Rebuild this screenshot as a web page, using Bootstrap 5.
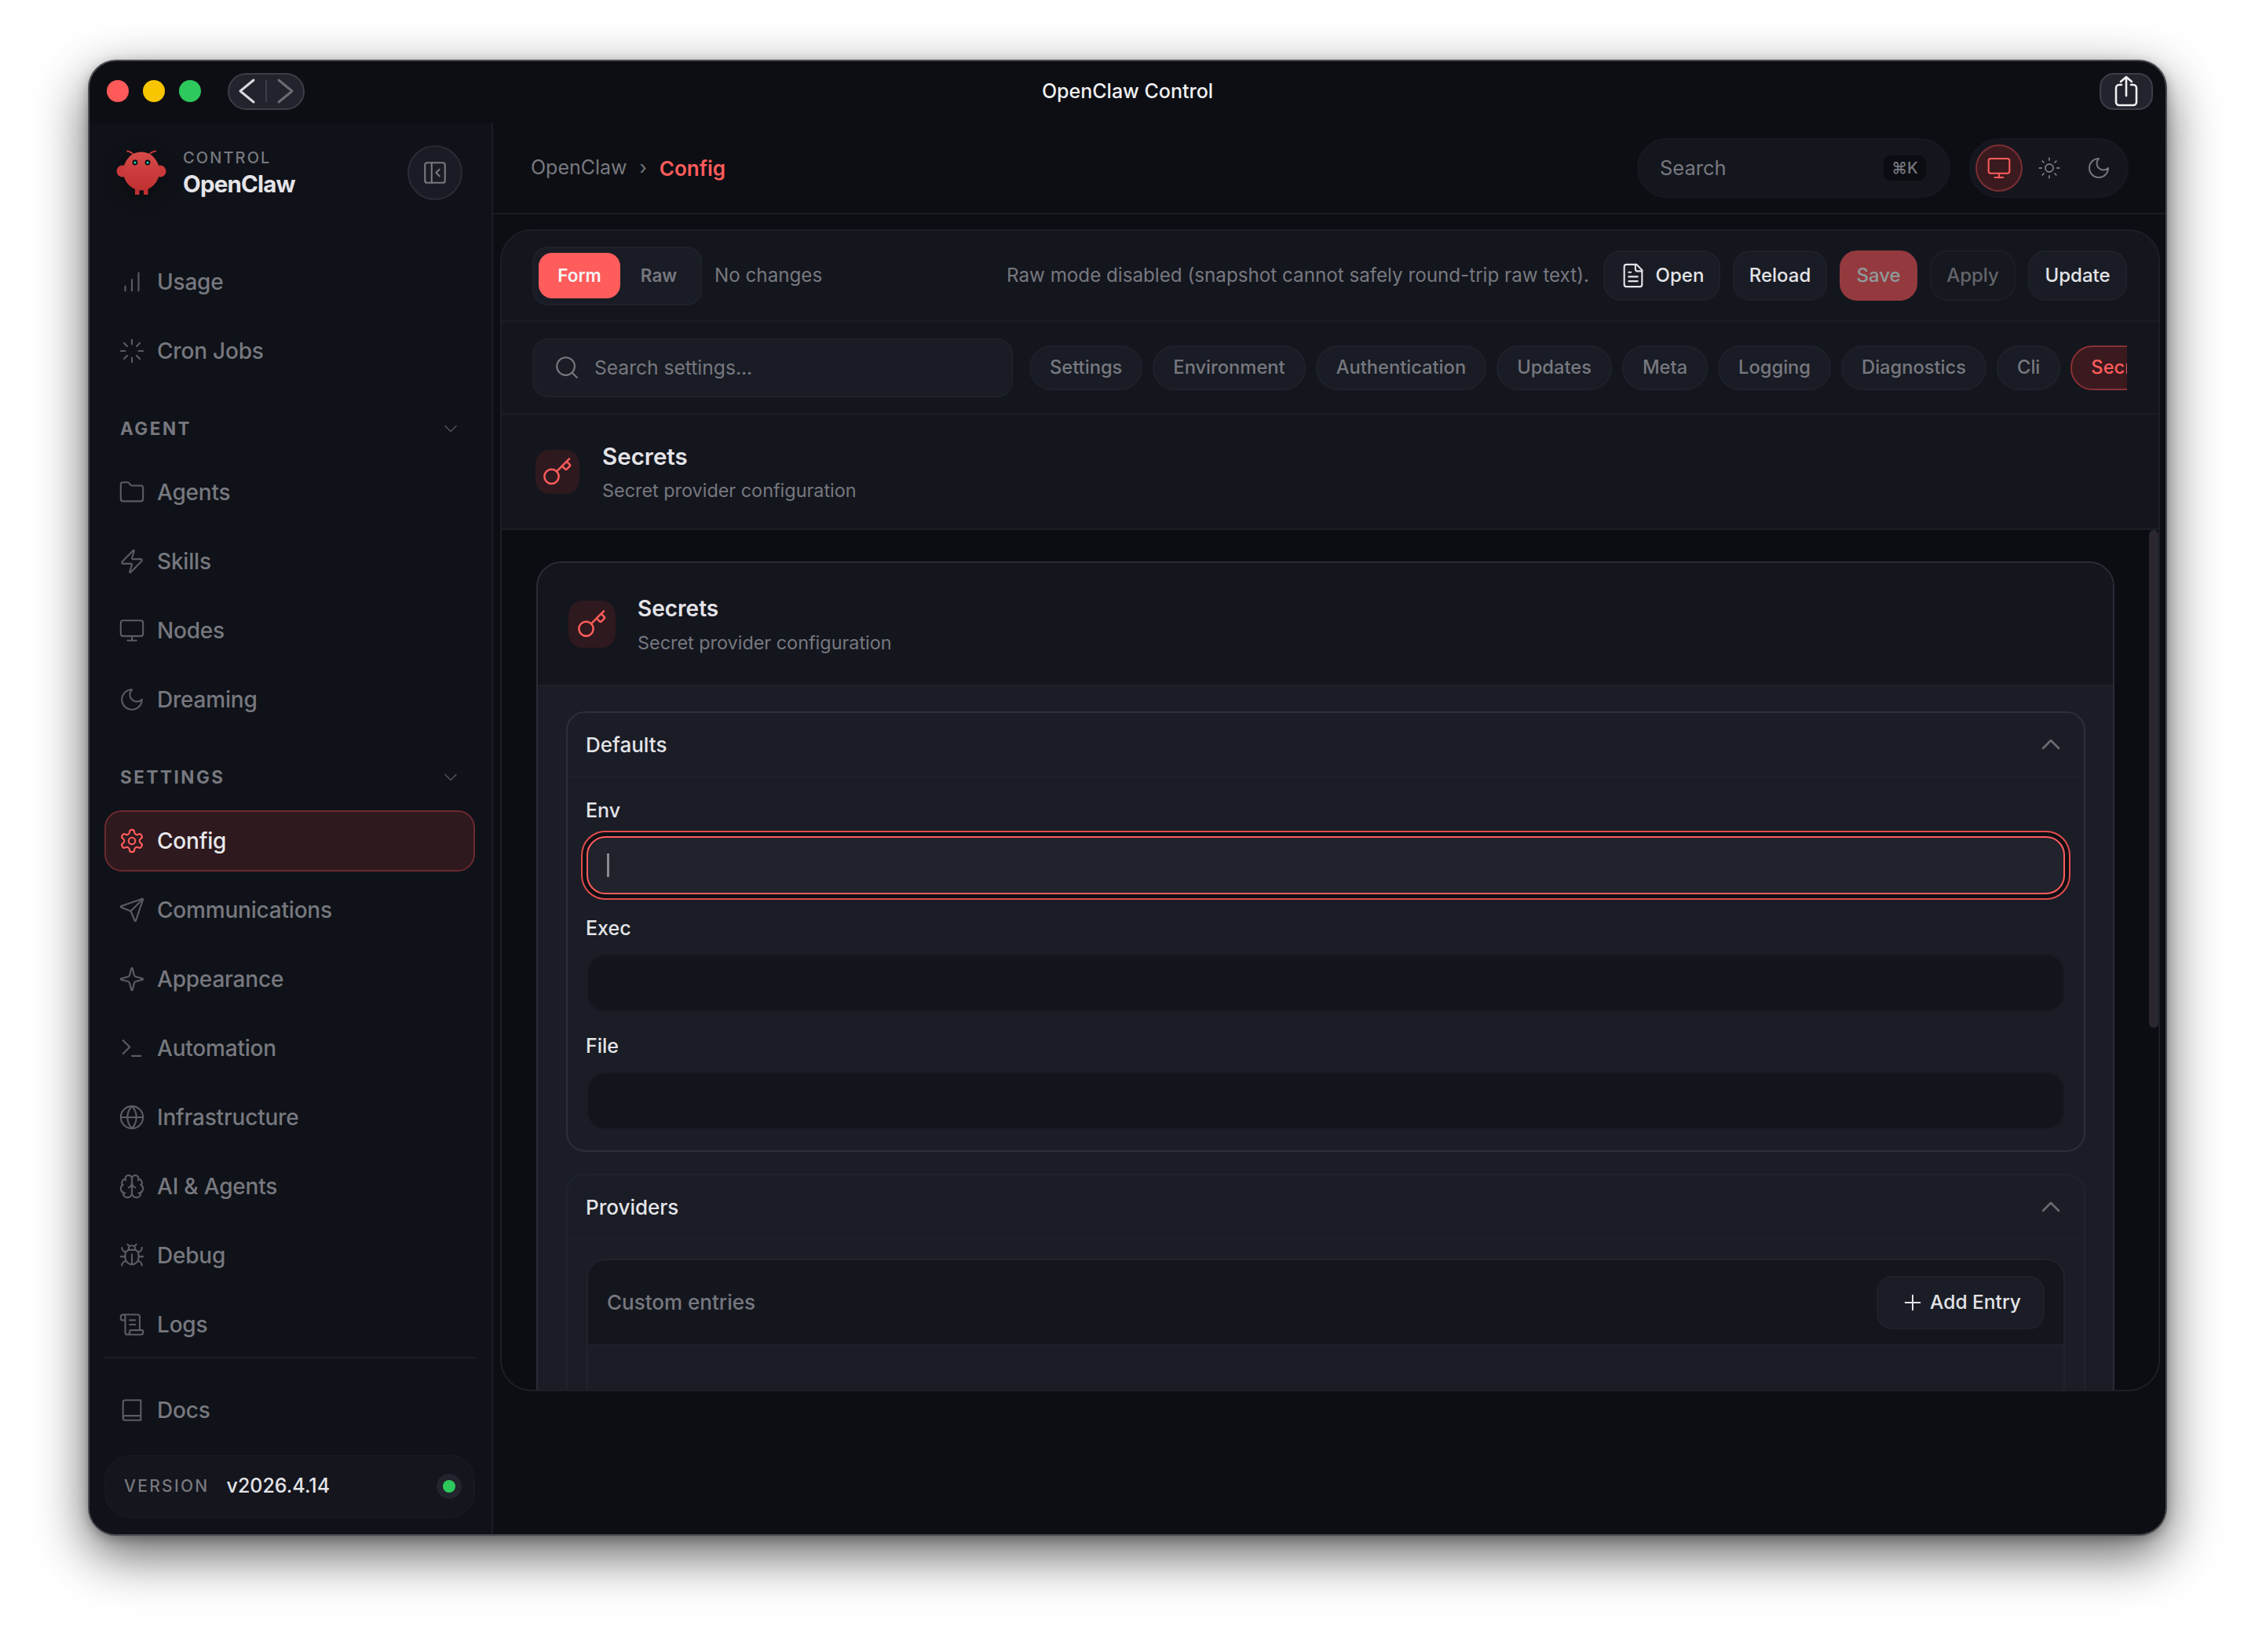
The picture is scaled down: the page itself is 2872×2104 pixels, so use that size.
<!DOCTYPE html>
<html lang="en">
<head>
    <meta charset="UTF-8">
    <title>OpenClaw Control</title>
    <link href="https://cdn.jsdelivr.net/npm/bootstrap@5.3.0/dist/css/bootstrap.min.css" rel="stylesheet">
    <script src="https://cdn.jsdelivr.net/npm/bootstrap@5.3.0/dist/js/bootstrap.bundle.min.js"></script>
    <style>
        html, body { height: 100%; }
        body {
            background: #fff;
            font-family: Inter, "Liberation Sans", sans-serif;
            font-size: 26px;
            color: #e4e4e8;
            padding: 76px 112px 149px;
            overflow: hidden;
        }
        svg.ico { fill: none; stroke: currentColor; stroke-linecap: round; stroke-linejoin: round; stroke-width: 1.5; flex-shrink: 0; }

        /* window */
        .app-window {
            height: 1880px;
            background: #0d0e13;
            border: 2px solid #4a4b50;
            border-radius: 36px;
            box-shadow: 0 24px 66px rgba(0, 0, 0, .62), 0 4px 14px rgba(0, 0, 0, .25);
            overflow: hidden;
        }
        .title-bar { height: 79px; flex-shrink: 0; padding: 0 16px 3px 16px; }
        .title-side { flex: 1 1 0; }
        .title-text { font-size: 25px; font-weight: 500; color: #f0f0f2; padding-top: 2px; }
        .light { width: 28px; height: 28px; border-radius: 50%; margin-right: 18px; }
        .light:first-child { margin-left: 6px; }
        .nav-pill-box {
            width: 98px; height: 47px; margin-left: 16px;
            background: #22232c; border: 2px solid #3c3d46; border-radius: 24px;
        }
        .nav-pill-box span { width: 2px; height: 28px; margin: 0 8px; background: #3c3d46; }
        .nav-pill-box svg { flex-shrink: 0; }
        .share-btn {
            width: 68px; height: 47px;
            background: #22232c; border: 2px solid #3c3d46; border-radius: 18px; color: #f0f0f2;
        }

        /* sidebar */
        .side-bar {
            width: 514px; flex-shrink: 0;
            background: #0f1218;
            border-right: 2px solid #1b1e26;
            padding: 28px 21px 21px 19px;
        }
        .brand-row { height: 70px; margin-bottom: 65px; padding-left: 15px; padding-right: 16px; }
        .brand-logo { filter: drop-shadow(0 6px 12px rgba(0, 0, 0, .4)); margin-right: 21px; }
        .brand-small { font-size: 20px; font-weight: 500; letter-spacing: 2.1px; color: #77787f; line-height: 26px; padding-top: 2px; }
        .brand-big { font-size: 29.5px; font-weight: 700; letter-spacing: -.8px; color: #e4e4e8; line-height: 40px; }
        .collapse-btn {
            width: 70px; height: 70px; color: #77787f;
            background: #1a1c25; border: 2px solid #2a2c35; border-radius: 50%;
        }
        .side-link {
            height: 78px; margin-bottom: 10px; padding-left: 16px;
            border: 2px solid transparent; border-radius: 22px;
            font-size: 28px; font-weight: 500; letter-spacing: -.2px; color: #77787f; text-decoration: none;
        }
        .side-link svg { margin-right: 15px; color: #5b5c63; }
        .side-link.is-on { background: #2e191e; border-color: #6c2a30; color: #e8e8ec; }
        .side-link.is-on svg { color: #ff5c5c; }
        .side-head {
            height: 40px; margin: 30px 0 22px; padding: 0 17px 0 20px;
            font-size: 22.5px; font-weight: 700; letter-spacing: 2.5px; color: #77787f;
        }
        .side-head svg { color: #55565d; stroke-width: 1.2; }
        .side-rule { height: 2px; background: #1b1e26; margin: -8px 0 27px; }
        .version-box {
            height: 80px; margin-top: 8px; padding: 0 16px 0 23px;
            background: #14151d; border: 2px solid #171922; border-radius: 32px;
        }
        .version-label { font-size: 21px; font-weight: 500; letter-spacing: 2.3px; color: #77787f; margin-right: 22px; }
        .version-num { font-size: 25px; font-weight: 500; color: #e4e4e8; }
        .status-dot { width: 16px; height: 16px; border-radius: 50%; background: #2ec95c; box-shadow: 0 0 0 8px #22242e; margin-right: 7px; }

        /* top bar */
        .top-bar { height: 116px; flex-shrink: 0; padding: 0 47px 0 48px; border-bottom: 2px solid #1a1c24; }
        .crumb { font-size: 25px; color: #77787f; }
        .crumb-sep { font-size: 24px; margin: 0 16px; }
        .crumb-now { font-size: 26px; font-weight: 600; color: #ff5c5c; }
        .top-search {
            width: 399px; height: 76px; padding: 0 29px 0 27px;
            background: #14161e; border: 2px solid #171922; border-radius: 38px;
            font-size: 25.5px; color: #77787f;
        }
        .key-hint {
            width: 54px; height: 32px; background: #0c0d12; border-radius: 9px;
            font-size: 20px; font-weight: 500; color: #77787f;
        }
        .theme-box {
            width: 203px; height: 76px; margin-left: 24px; padding: 0 6px;
            background: #14161e; border: 2px solid #171922; border-radius: 38px; color: #77787f;
        }
        .theme-on { width: 60px; height: 60px; border-radius: 50%; background: #3a1a1e; border: 2px solid #7a2e32; color: #ff5c5c; }
        .theme-off { width: 68px; height: 60px; }
        .theme-off.is-narrow { width: 60px; }

        /* config panel */
        .config-panel {
            height: 1480px; margin: 19px 7px 0 9px;
            background: #14161e; border: 2px solid #1d1f28; border-radius: 40px; overflow: hidden;
        }
        .tool-row { height: 116px; flex-shrink: 0; padding: 0 40px 0 39px; border-bottom: 2px solid #1c1e27; }
        .seg-box { width: 216px; height: 75px; padding: 0 6px; background: #191c25; border: 2px solid #1e212a; border-radius: 20px; }
        .seg-btn { height: 58px; font-size: 22.5px; font-weight: 600; border-radius: 17px; padding: 0; color: #77787f; border: 0; }
        .seg-btn.is-on { width: 104px; flex-shrink: 0; background: #ff5c5c; color: #f5f5f6; }
        .seg-btn.is-off { flex: 1 1 0; padding-left: 2px; background: transparent; }
        .soft-text { font-size: 24.2px; color: #77787f; }
        .act-btn {
            height: 64px; padding: 0; font-size: 24px; font-weight: 500;
            color: #e4e4e8; background: #191c25; border: 2px solid #1e212a; border-radius: 22px;
        }
        .act-btn:disabled { opacity: 1; }
        .act-btn svg { margin-right: 12px; }
        .act-open { width: 149px; }
        .act-reload { width: 120px; }
        .act-save { width: 99px; background: #943a3f; border-color: #943a3f; color: #8f9a9a; }
        .act-apply { width: 109px; background: #16181f; border-color: #1c1e26; color: #63646b; }
        .act-update { width: 126px; }
        .chip-row { height: 118px; flex-shrink: 0; padding: 0 40px 0 39px; border-bottom: 2px solid #1c1e27; }
        .setting-search {
            width: 612px; height: 75px; padding: 0 25px; margin-right: 21px; flex-shrink: 0;
            background: #191c25; border: 2px solid #1e212a; border-radius: 20px; font-size: 24.6px; color: #77787f;
        }
        .setting-search svg { margin-right: 18px; }
        .chip-strip { overflow: hidden; gap: 13px; min-width: 0; }
        .chip-item {
            height: 57px; padding: 0 24px; flex-shrink: 0;
            font-size: 23.7px; font-weight: 500; color: #77787f;
            background: #191c25; border: 2px solid #1e212a; border-radius: 28px;
        }
        .chip-item.is-on { background: #3a1a1e; border-color: #8a3036; color: #ff5c5c; }
        .hero-row { height: 147px; flex-shrink: 0; padding-left: 43px; border-bottom: 2px solid #1c1e27; }
        .key-tile { width: 56px; height: 56px; margin-right: 29px; border-radius: 18px; background: #2e191e; color: #ff5c5c; }
        .hero-text { padding-top: 4px; }
        .hero-title { font-size: 29.5px; font-weight: 600; line-height: 38px; color: #e4e4e8; }
        .hero-sub { font-size: 23.4px; line-height: 36px; color: #77787f; margin-top: 7px; }
        .panel-body { background: #0c0d12; padding: 40px 56px 0 44px; overflow: hidden; min-height: 0; }
        .scroll-thumb { position: absolute; top: 0; right: 0; width: 12px; height: 634px; border-radius: 6px; background: #2a2730; }

        /* cards */
        .group-card { background: #1a1d26; border: 2px solid #2a2c36; border-radius: 32px 32px 0 0; overflow: hidden; }
        .group-card-head { height: 157px; padding-left: 39px; background: #14161e; border-bottom: 2px solid #1e2029; }
        .group-card-head .key-tile { width: 60px; height: 60px; margin-right: 28px; }
        .group-card-head .hero-text { padding-top: 4px; }
        .group-card-head .hero-title { font-size: 28px; }
        .group-card-head .hero-sub { margin-top: 7px; }
        .group-card-body { padding: 32px 35px 300px 36px; }
        .sub-card { border: 2px solid #2c2e39; border-radius: 24px; }
        .sub-card.is-faint { border-color: #20232c; margin-top: 28px; }
        .sub-head { height: 82px; padding: 0 30px 0 23px; border-bottom: 2px solid #1d2029; font-size: 26px; font-weight: 500; color: #e4e4e8; }
        .sub-chev { fill: none; stroke: #6b6c72; stroke-width: 2.6; stroke-linecap: round; stroke-linejoin: round; }
        .sub-body { padding: 27px 24px 26px; }
        .is-faint .sub-body { padding-top: 24px; }
        .field-label { display: block; height: 30px; line-height: 30px; margin: 0 0 18px -1px; font-size: 25px; font-weight: 500; color: #e4e4e8; }
        .field-input {
            height: 74px; padding: 0 26px; font-size: 26px; color: #e4e4e8;
            background: #13151d; border: 2px solid #191b23; border-radius: 24px; box-shadow: none;
        }
        .field-gap { margin-bottom: 28px; }
        .field-input.is-focus { background: #20222c; border-color: #ff5c5c; box-shadow: 0 0 0 5px #0e0f14, 0 0 0 7px #e04c4c; }
        .text-caret { position: absolute; left: 26px; top: 22px; width: 3px; height: 30px; background: #8a8a8f; }
        .entry-box { border: 2px solid #20232c; border-radius: 24px 24px 0 0; overflow: hidden; }
        .entry-head { height: 109px; padding: 0 24px; background: #14161e; border-bottom: 2px solid #1e2029; font-size: 26px; font-weight: 500; color: #77787f; }
        .add-btn {
            width: 214px; height: 68px; padding: 0; font-size: 24.5px; font-weight: 500; color: #e4e4e8;
            background: #1a1d26; border: 2px solid #1e212a; border-radius: 20px;
        }
        .add-btn svg { margin-right: 6px; }
        .entry-fill { height: 240px; }
    </style>
</head>
<body>
    <svg width="0" height="0" class="position-absolute">
        <defs>
            <symbol id="i-usage" viewBox="0 0 24 24"><path d="M12 20V10M18 20V4M6 20v-4"/></symbol>
            <symbol id="i-cron" viewBox="0 0 24 24"><path d="M12 2v4M12 18v4M4.93 4.93l2.83 2.83M16.24 16.24l2.83 2.83M2 12h4M18 12h4M4.93 19.07l2.83-2.83M16.24 7.76l2.83-2.83"/></symbol>
            <symbol id="i-folder" viewBox="0 0 24 24"><path d="M20 20a2 2 0 0 0 2-2V8a2 2 0 0 0-2-2h-7.9a2 2 0 0 1-1.69-.9L9.6 3.9A2 2 0 0 0 7.93 3H4a2 2 0 0 0-2 2v13a2 2 0 0 0 2 2Z"/></symbol>
            <symbol id="i-zap" viewBox="0 0 24 24"><path d="M4 14a1 1 0 0 1-.78-1.63l9.9-10.2a.5.5 0 0 1 .86.46l-1.92 6.02A1 1 0 0 0 13 10h7a1 1 0 0 1 .78 1.63l-9.9 10.2a.5.5 0 0 1-.86-.46l1.92-6.02A1 1 0 0 0 11 14z"/></symbol>
            <symbol id="i-monitor" viewBox="0 0 24 24"><rect x="2" y="3" width="20" height="14" rx="2"/><path d="M8 21h8M12 17v4"/></symbol>
            <symbol id="i-moon" viewBox="0 0 24 24"><path d="M12 3a6 6 0 0 0 9 9 9 9 0 1 1-9-9Z"/></symbol>
            <symbol id="i-gear" viewBox="0 0 24 24"><path d="M12.22 2h-.44a2 2 0 0 0-2 2v.18a2 2 0 0 1-1 1.73l-.43.25a2 2 0 0 1-2 0l-.15-.08a2 2 0 0 0-2.73.73l-.22.38a2 2 0 0 0 .73 2.73l.15.1a2 2 0 0 1 1 1.72v.51a2 2 0 0 1-1 1.74l-.15.09a2 2 0 0 0-.73 2.73l.22.38a2 2 0 0 0 2.73.73l.15-.08a2 2 0 0 1 2 0l.43.25a2 2 0 0 1 1 1.73V20a2 2 0 0 0 2 2h.44a2 2 0 0 0 2-2v-.18a2 2 0 0 1 1-1.73l.43-.25a2 2 0 0 1 2 0l.15.08a2 2 0 0 0 2.73-.73l.22-.39a2 2 0 0 0-.73-2.73l-.15-.08a2 2 0 0 1-1-1.74v-.5a2 2 0 0 1 1-1.74l.15-.09a2 2 0 0 0 .73-2.73l-.22-.38a2 2 0 0 0-2.73-.73l-.15.08a2 2 0 0 1-2 0l-.43-.25a2 2 0 0 1-1-1.73V4a2 2 0 0 0-2-2z"/><circle cx="12" cy="12" r="3"/></symbol>
            <symbol id="i-send" viewBox="0 0 24 24"><path d="M14.536 21.686a.5.5 0 0 0 .937-.024l6.5-19a.496.496 0 0 0-.635-.635l-19 6.5a.5.5 0 0 0-.024.937l7.93 3.18a2 2 0 0 1 1.112 1.11z"/><path d="m21.854 2.147-10.94 10.939"/></symbol>
            <symbol id="i-spark" viewBox="0 0 24 24"><path d="M9.937 15.5A2 2 0 0 0 8.5 14.063l-6.135-1.582a.5.5 0 0 1 0-.962L8.5 9.936A2 2 0 0 0 9.937 8.5l1.582-6.135a.5.5 0 0 1 .963 0L14.063 8.5A2 2 0 0 0 15.5 9.937l6.135 1.581a.5.5 0 0 1 0 .964L15.5 14.063a2 2 0 0 0-1.437 1.437l-1.582 6.135a.5.5 0 0 1-.963 0z"/></symbol>
            <symbol id="i-term" viewBox="0 0 24 24"><path d="m4 17 6-6-6-6M12 19h8"/></symbol>
            <symbol id="i-globe" viewBox="0 0 24 24"><circle cx="12" cy="12" r="10"/><path d="M12 2a14.5 14.5 0 0 0 0 20 14.5 14.5 0 0 0 0-20M2 12h20"/></symbol>
            <symbol id="i-brain" viewBox="0 0 24 24"><path d="M12 5a3 3 0 1 0-5.997.125 4 4 0 0 0-2.526 5.77 4 4 0 0 0 .556 6.588A4 4 0 1 0 12 18Z"/><path d="M12 5a3 3 0 1 1 5.997.125 4 4 0 0 1 2.526 5.77 4 4 0 0 1-.556 6.588A4 4 0 1 1 12 18Z"/><path d="M15 13a4.5 4.5 0 0 1-3-4 4.5 4.5 0 0 1-3 4M17.599 6.5a3 3 0 0 0 .399-1.375M6.003 5.125A3 3 0 0 0 6.401 6.5M3.477 10.896a4 4 0 0 1 .585-.396M19.938 10.5a4 4 0 0 1 .585.396M6 18a4 4 0 0 1-1.967-.516M19.967 17.484A4 4 0 0 1 18 18"/></symbol>
            <symbol id="i-bug" viewBox="0 0 24 24"><path d="M12 20v-9M14 7a4 4 0 0 1 4 4v3a6 6 0 0 1-12 0v-3a4 4 0 0 1 4-4zM14.12 3.88 16 2M21 21a4 4 0 0 0-3.81-4M21 5a4 4 0 0 1-3.55 3.97M22 13h-4M3 21a4 4 0 0 1 3.81-4M3 5a4 4 0 0 0 3.55 3.97M6 13H2M8 2l1.88 1.88M9 7.13V6a3 3 0 1 1 6 0v1.13"/></symbol>
            <symbol id="i-scroll" viewBox="0 0 24 24"><path d="M15 12h-5M15 8h-5M19 17V5a2 2 0 0 0-2-2H4M8 21h12a2 2 0 0 0 2-2v-1a1 1 0 0 0-1-1H11a1 1 0 0 0-1 1v1a2 2 0 1 1-4 0V5a2 2 0 1 0-4 0v2a1 1 0 0 0 1 1h3"/></symbol>
            <symbol id="i-book" viewBox="0 0 24 24"><path d="M4 19V5a2 2 0 0 1 2-2h14v18H6a2 2 0 0 1-2-2 2 2 0 0 1 2-2h14"/></symbol>
            <symbol id="i-key" viewBox="0 0 24 24"><path d="m15.5 7.5 2.3 2.3a1 1 0 0 0 1.4 0l2.1-2.1a1 1 0 0 0 0-1.4L19 4M21 2l-9.6 9.6"/><circle cx="7.5" cy="15.5" r="5.5"/></symbol>
            <symbol id="i-search" viewBox="0 0 24 24"><circle cx="11" cy="11" r="8"/><path d="m21 21-4.3-4.3"/></symbol>
            <symbol id="i-sun" viewBox="0 0 24 24"><circle cx="12" cy="12" r="4"/><path d="M12 2v2M12 20v2M4.93 4.93l1.41 1.41M17.66 17.66l1.41 1.41M2 12h2M20 12h2M6.34 17.66l-1.41 1.41M19.07 4.93l-1.41 1.41"/></symbol>
            <symbol id="i-file" viewBox="0 0 24 24"><path d="M15 2H6a2 2 0 0 0-2 2v16a2 2 0 0 0 2 2h12a2 2 0 0 0 2-2V7Z"/><path d="M14 2v4a2 2 0 0 0 2 2h4M10 9H8M16 13H8M16 17H8"/></symbol>
            <symbol id="i-plus" viewBox="0 0 24 24"><path d="M5 12h14M12 5v14"/></symbol>
            <symbol id="i-down" viewBox="0 0 24 24"><path d="m6 9 6 6 6-6"/></symbol>
            <symbol id="i-panel" viewBox="0 0 24 24"><rect x="3" y="3" width="18" height="18" rx="2"/><path d="M9 3v18M16 15l-3-3 3-3"/></symbol>
        </defs>
    </svg>

    <div class="app-window d-flex flex-column">
        <header class="title-bar d-flex align-items-center">
            <div class="title-side d-flex align-items-center">
                <span class="light" style="background:#ff5a5a"></span>
                <span class="light" style="background:#f8c600"></span>
                <span class="light" style="background:#2ec95c"></span>
                <div class="nav-pill-box d-flex align-items-center justify-content-center">
                    <svg width="30" height="34" viewBox="0 0 30 34" fill="none" stroke="#d8d8dc" stroke-width="3" stroke-linecap="round" stroke-linejoin="round"><path d="M23 3 6 17l17 14"/></svg>
                    <span></span>
                    <svg width="30" height="34" viewBox="0 0 30 34" fill="none" stroke="#6b6c72" stroke-width="3" stroke-linecap="round" stroke-linejoin="round"><path d="m7 3 17 14L7 31"/></svg>
                </div>
            </div>
            <div class="title-text">OpenClaw Control</div>
            <div class="title-side d-flex justify-content-end">
                <div class="share-btn d-flex align-items-center justify-content-center">
                    <svg width="30" height="40" viewBox="0 0 30 40" fill="none" stroke="currentColor" stroke-width="2.6" stroke-linecap="round" stroke-linejoin="round"><path d="M9 12H6a4 4 0 0 0-4 4v18a4 4 0 0 0 4 4h18a4 4 0 0 0 4-4V16a4 4 0 0 0-4-4h-3M15 26V2M8 8l7-6 7 6"/></svg>
                </div>
            </div>
        </header>

        <div class="d-flex flex-grow-1" style="min-height:0">
            <aside class="side-bar d-flex flex-column">
                <div class="brand-row d-flex align-items-center">
                    <svg class="brand-logo" width="64" height="62" viewBox="0 0 64 62">
                        <defs><linearGradient id="logo-red" x1="0" y1="0" x2="0" y2="1"><stop offset="0" stop-color="#d64a4a"/><stop offset="1" stop-color="#c03030"/></linearGradient></defs>
                        <path d="M22 8C20 5 17 4 14 3.5M42 8c2-3 5-4 8-4.5" fill="none" stroke="#c83a3a" stroke-width="2" stroke-linecap="round"/>
                        <circle cx="8" cy="29" r="7.5" fill="#c83a3a"/><circle cx="56" cy="29" r="7.5" fill="#c83a3a"/>
                        <rect x="24" y="50" width="5.5" height="9" fill="#c03030"/><rect x="35" y="50" width="5.5" height="9" fill="#c03030"/>
                        <ellipse cx="32" cy="29" rx="23" ry="24.5" fill="url(#logo-red)"/>
                        <circle cx="24" cy="18" r="3.4" fill="#0c0d12"/><circle cx="40" cy="18" r="3.4" fill="#0c0d12"/>
                        <circle cx="24" cy="18" r="1.6" fill="#19d4b4"/><circle cx="40" cy="18" r="1.6" fill="#19d4b4"/>
                    </svg>
                    <div class="flex-grow-1">
                        <div class="brand-small">CONTROL</div>
                        <div class="brand-big">OpenClaw</div>
                    </div>
                    <div class="collapse-btn d-flex align-items-center justify-content-center">
                        <svg class="ico" width="34" height="34"><use href="#i-panel"/></svg>
                    </div>
                </div>

                <nav class="d-flex flex-column">
                    <a class="side-link d-flex align-items-center" href="#"><svg class="ico" width="34" height="34"><use href="#i-usage"/></svg>Usage</a>
                    <a class="side-link d-flex align-items-center" href="#"><svg class="ico" width="34" height="34"><use href="#i-cron"/></svg>Cron Jobs</a>

                    <div class="side-head d-flex align-items-center justify-content-between">AGENT<svg class="ico" width="28" height="28"><use href="#i-down"/></svg></div>
                    <a class="side-link d-flex align-items-center" href="#"><svg class="ico" width="34" height="34"><use href="#i-folder"/></svg>Agents</a>
                    <a class="side-link d-flex align-items-center" href="#"><svg class="ico" width="34" height="34"><use href="#i-zap"/></svg>Skills</a>
                    <a class="side-link d-flex align-items-center" href="#"><svg class="ico" width="34" height="34"><use href="#i-monitor"/></svg>Nodes</a>
                    <a class="side-link d-flex align-items-center" href="#"><svg class="ico" width="34" height="34"><use href="#i-moon"/></svg>Dreaming</a>

                    <div class="side-head d-flex align-items-center justify-content-between">SETTINGS<svg class="ico" width="28" height="28"><use href="#i-down"/></svg></div>
                    <a class="side-link is-on d-flex align-items-center" href="#"><svg class="ico" width="34" height="34"><use href="#i-gear"/></svg>Config</a>
                    <a class="side-link d-flex align-items-center" href="#"><svg class="ico" width="34" height="34"><use href="#i-send"/></svg>Communications</a>
                    <a class="side-link d-flex align-items-center" href="#"><svg class="ico" width="34" height="34"><use href="#i-spark"/></svg>Appearance</a>
                    <a class="side-link d-flex align-items-center" href="#"><svg class="ico" width="34" height="34"><use href="#i-term"/></svg>Automation</a>
                    <a class="side-link d-flex align-items-center" href="#"><svg class="ico" width="34" height="34"><use href="#i-globe"/></svg>Infrastructure</a>
                    <a class="side-link d-flex align-items-center" href="#"><svg class="ico" width="34" height="34"><use href="#i-brain"/></svg>AI &amp; Agents</a>
                    <a class="side-link d-flex align-items-center" href="#"><svg class="ico" width="34" height="34"><use href="#i-bug"/></svg>Debug</a>
                    <a class="side-link d-flex align-items-center" href="#"><svg class="ico" width="34" height="34"><use href="#i-scroll"/></svg>Logs</a>
                    <div class="side-rule"></div>
                    <a class="side-link d-flex align-items-center" href="#"><svg class="ico" width="34" height="34"><use href="#i-book"/></svg>Docs</a>
                </nav>

                <div class="version-box d-flex align-items-center">
                    <span class="version-label">VERSION</span>
                    <span class="version-num flex-grow-1">v2026.4.14</span>
                    <span class="status-dot"></span>
                </div>
            </aside>

            <main class="flex-grow-1 d-flex flex-column" style="min-width:0">
                <div class="top-bar d-flex align-items-center">
                    <div class="d-flex align-items-center flex-grow-1">
                        <span class="crumb">OpenClaw</span>
                        <span class="crumb crumb-sep">›</span>
                        <span class="crumb-now">Config</span>
                    </div>
                    <div class="top-search d-flex align-items-center justify-content-between">
                        <span>Search</span>
                        <span class="key-hint d-flex align-items-center justify-content-center">⌘K</span>
                    </div>
                    <div class="theme-box d-flex align-items-center">
                        <div class="theme-on d-flex align-items-center justify-content-center"><svg class="ico" width="32" height="32"><use href="#i-monitor"/></svg></div>
                        <div class="theme-off d-flex align-items-center justify-content-center"><svg class="ico" width="30" height="30"><use href="#i-sun"/></svg></div>
                        <div class="theme-off is-narrow d-flex align-items-center justify-content-center"><svg class="ico" width="32" height="32"><use href="#i-moon"/></svg></div>
                    </div>
                </div>

                <div class="config-panel d-flex flex-column">
                    <div class="tool-row d-flex align-items-center">
                        <div class="seg-box d-flex align-items-center">
                            <button class="btn seg-btn is-on" type="button">Form</button>
                            <button class="btn seg-btn is-off" type="button">Raw</button>
                        </div>
                        <span class="soft-text ms-3">No changes</span>
                        <span class="soft-text ms-auto" style="margin-right:18px">Raw mode disabled (snapshot cannot safely round-trip raw text).</span>
                        <div class="d-flex gap-3">
                            <button class="btn act-btn act-open d-flex align-items-center justify-content-center" type="button"><svg class="ico" width="34" height="34"><use href="#i-file"/></svg>Open</button>
                            <button class="btn act-btn act-reload" type="button">Reload</button>
                            <button class="btn act-btn act-save" type="button">Save</button>
                            <button class="btn act-btn act-apply" type="button">Apply</button>
                            <button class="btn act-btn act-update" type="button">Update</button>
                        </div>
                    </div>

                    <div class="chip-row d-flex align-items-center">
                        <div class="setting-search d-flex align-items-center">
                            <svg class="ico" width="34" height="34"><use href="#i-search"/></svg>
                            <span>Search settings...</span>
                        </div>
                        <div class="chip-strip d-flex flex-nowrap">
                            <span class="chip-item d-flex align-items-center">Settings</span>
                            <span class="chip-item d-flex align-items-center">Environment</span>
                            <span class="chip-item d-flex align-items-center">Authentication</span>
                            <span class="chip-item d-flex align-items-center">Updates</span>
                            <span class="chip-item d-flex align-items-center">Meta</span>
                            <span class="chip-item d-flex align-items-center">Logging</span>
                            <span class="chip-item d-flex align-items-center">Diagnostics</span>
                            <span class="chip-item d-flex align-items-center">Cli</span>
                            <span class="chip-item is-on d-flex align-items-center">Secrets</span>
                        </div>
                    </div>

                    <div class="hero-row d-flex align-items-center">
                        <div class="key-tile d-flex align-items-center justify-content-center"><svg class="ico" width="40" height="40"><use href="#i-key"/></svg></div>
                        <div class="hero-text">
                            <div class="hero-title">Secrets</div>
                            <div class="hero-sub">Secret provider configuration</div>
                        </div>
                    </div>

                    <div class="panel-body flex-grow-1 position-relative">
                        <div class="scroll-thumb"></div>
                        <div class="group-card">
                            <div class="group-card-head d-flex align-items-center">
                                <div class="key-tile d-flex align-items-center justify-content-center"><svg class="ico" width="40" height="40"><use href="#i-key"/></svg></div>
                                <div class="hero-text">
                                    <div class="hero-title">Secrets</div>
                                    <div class="hero-sub">Secret provider configuration</div>
                                </div>
                            </div>
                            <div class="group-card-body">
                                <div class="sub-card">
                                    <div class="sub-head d-flex align-items-center justify-content-between">Defaults<svg class="sub-chev" width="24" height="14" viewBox="0 0 24 14"><path d="m2 12 10-10 10 10"/></svg></div>
                                    <div class="sub-body">
                                        <label class="field-label">Env</label>
                                        <div class="position-relative field-gap">
                                            <input class="form-control field-input is-focus" type="text">
                                            <span class="text-caret"></span>
                                        </div>
                                        <label class="field-label">Exec</label>
                                        <input class="form-control field-input field-gap" type="text">
                                        <label class="field-label">File</label>
                                        <input class="form-control field-input" type="text">
                                    </div>
                                </div>
                                <div class="sub-card is-faint">
                                    <div class="sub-head d-flex align-items-center justify-content-between">Providers<svg class="sub-chev" width="24" height="14" viewBox="0 0 24 14"><path d="m2 12 10-10 10 10"/></svg></div>
                                    <div class="sub-body">
                                        <div class="entry-box">
                                            <div class="entry-head d-flex align-items-center justify-content-between">
                                                <span>Custom entries</span>
                                                <button class="btn add-btn d-flex align-items-center justify-content-center" type="button"><svg class="ico" width="32" height="32"><use href="#i-plus"/></svg>Add Entry</button>
                                            </div>
                                            <div class="entry-fill"></div>
                                        </div>
                                    </div>
                                </div>
                            </div>
                        </div>
                    </div>
                </div>
            </main>
        </div>
    </div>
</body>
</html>
